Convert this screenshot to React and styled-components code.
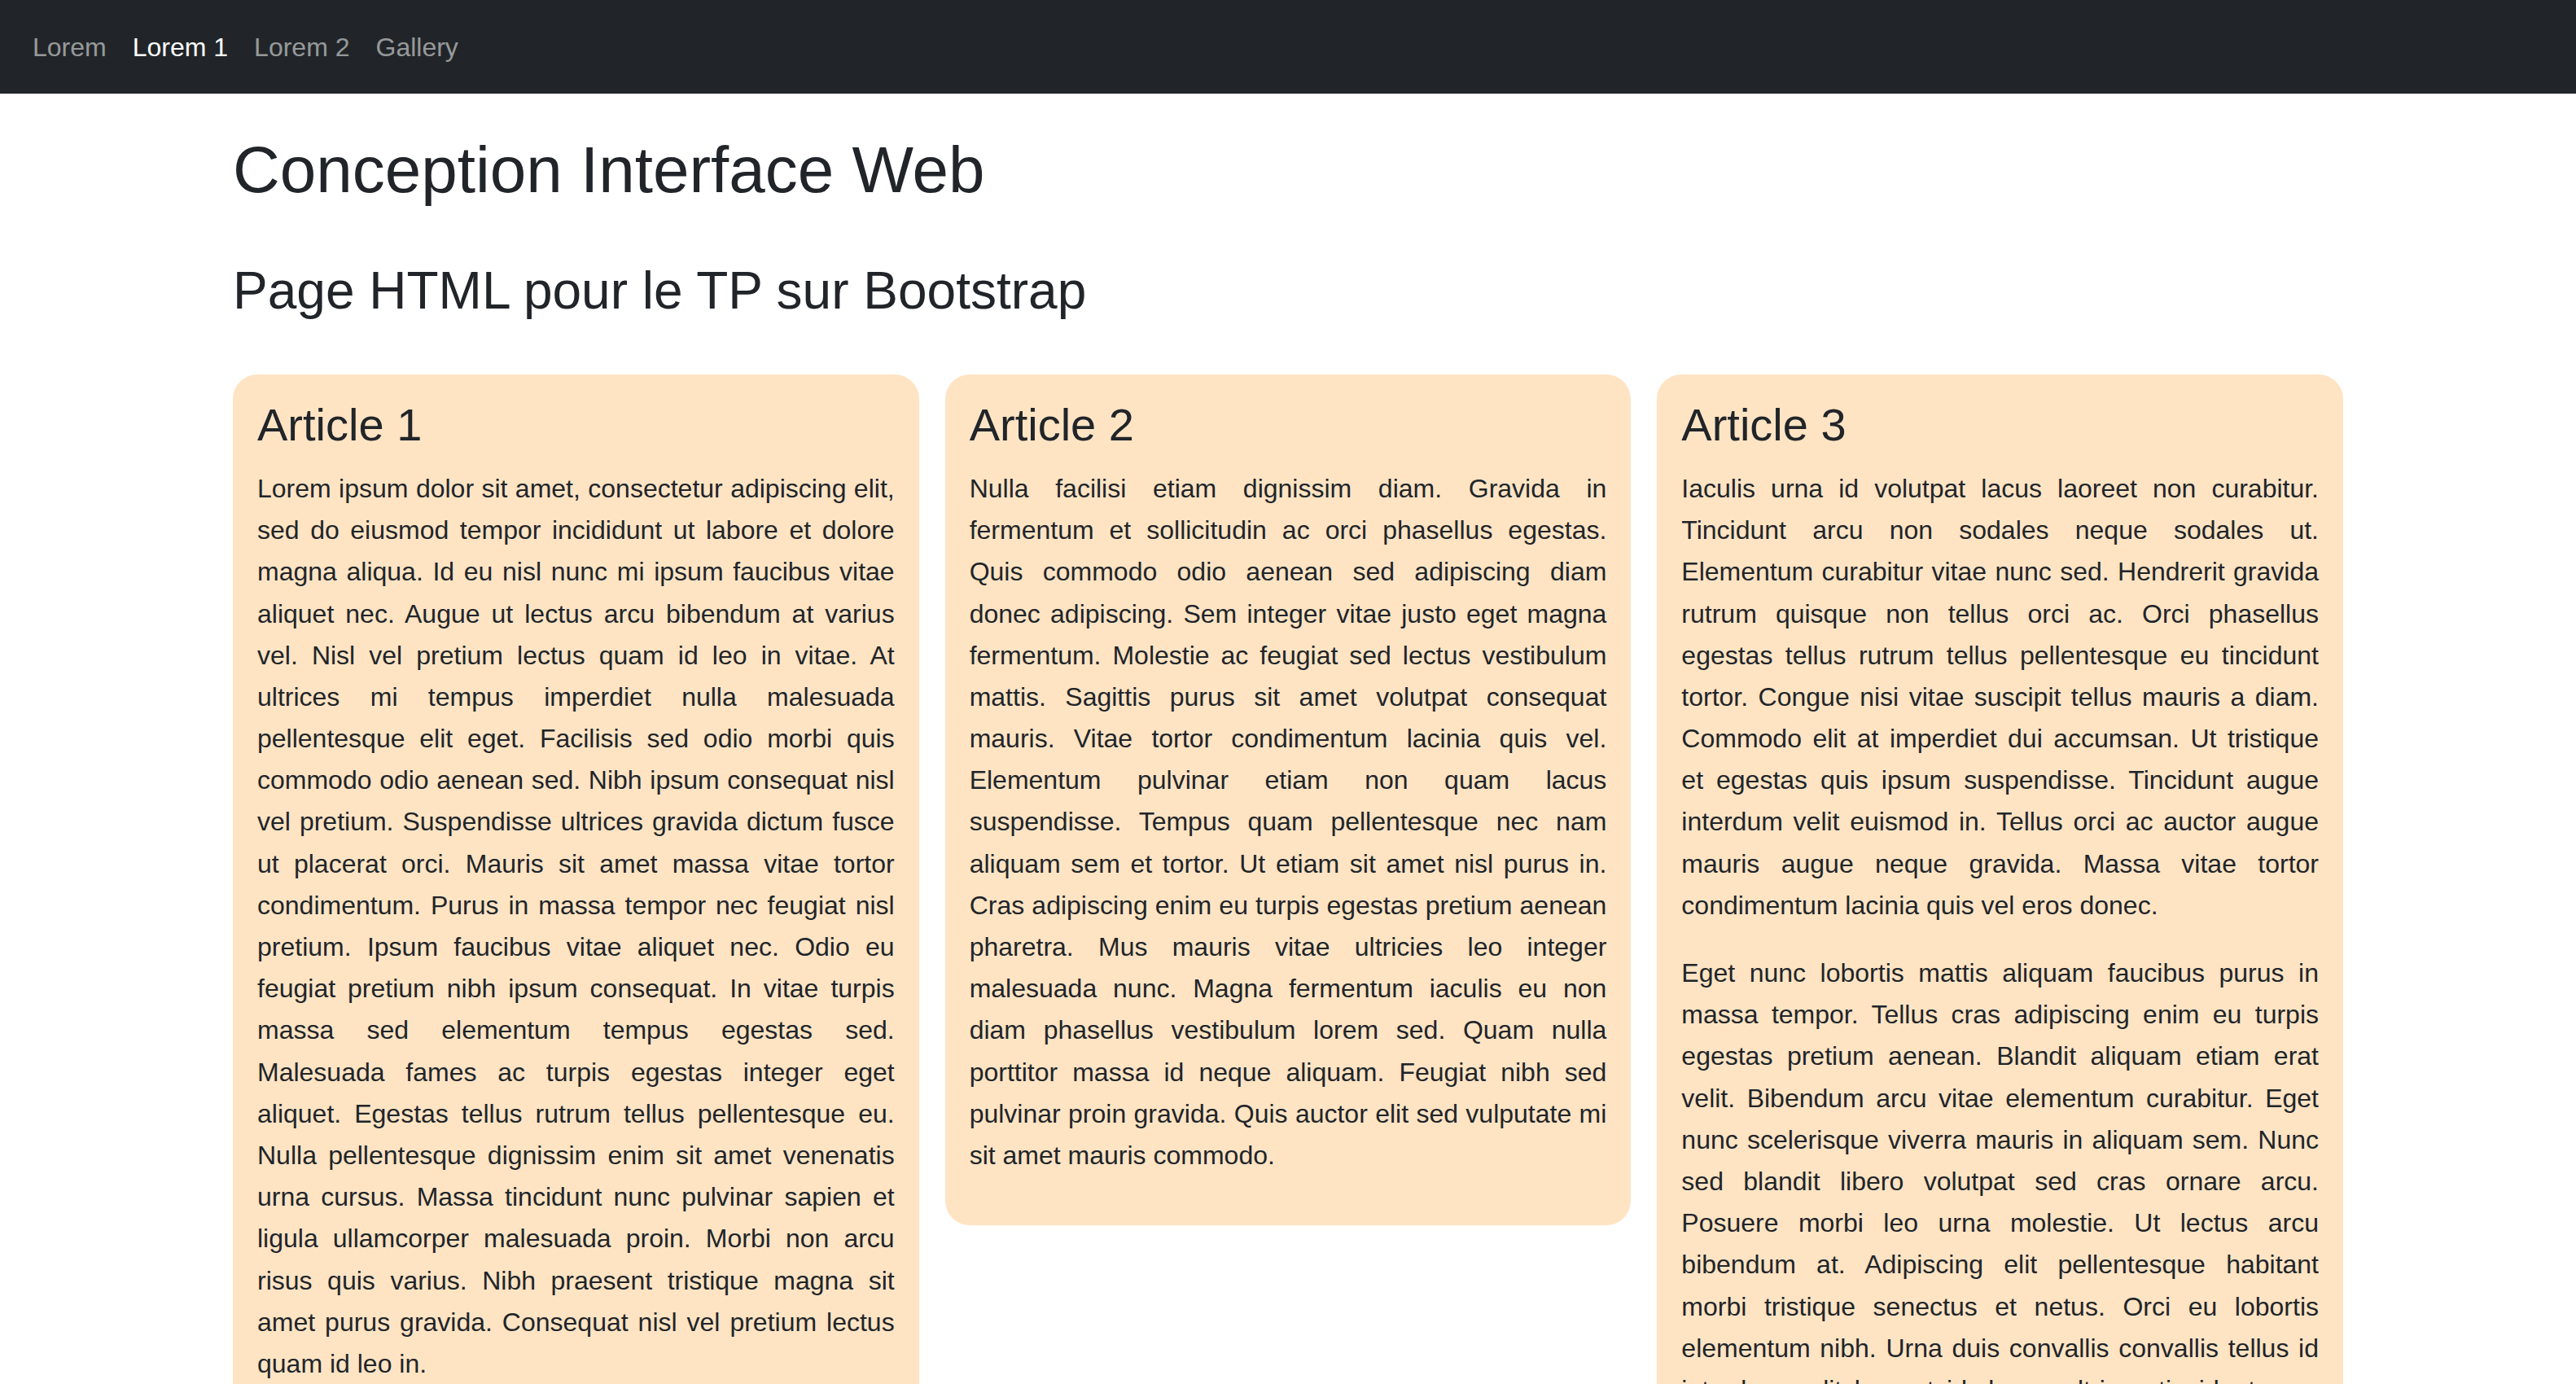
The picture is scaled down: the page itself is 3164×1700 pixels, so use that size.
import styled, { createGlobalStyle } from "styled-components";

const GlobalStyle = createGlobalStyle`
    * { box-sizing: border-box; }
    body {
        margin: 0;
        background: #fff;
        color: #212529;
        font-family: "Liberation Sans", Arial, sans-serif;
    }
`;

const links = [
    { label: 'Lorem', active: false },
    { label: 'Lorem 1', active: true },
    { label: 'Lorem 2', active: false },
    { label: 'Gallery', active: false },
];

const articles = [
    {
        title: 'Article 1',
        paragraphs: [
            'Lorem ipsum dolor sit amet, consectetur adipiscing elit, sed do eiusmod tempor incididunt ut labore et dolore magna aliqua. Id eu nisl nunc mi ipsum faucibus vitae aliquet nec. Augue ut lectus arcu bibendum at varius vel. Nisl vel pretium lectus quam id leo in vitae. At ultrices mi tempus imperdiet nulla malesuada pellentesque elit eget. Facilisis sed odio morbi quis commodo odio aenean sed. Nibh ipsum consequat nisl vel pretium. Suspendisse ultrices gravida dictum fusce ut placerat orci. Mauris sit amet massa vitae tortor condimentum. Purus in massa tempor nec feugiat nisl pretium. Ipsum faucibus vitae aliquet nec. Odio eu feugiat pretium nibh ipsum consequat. In vitae turpis massa sed elementum tempus egestas sed. Malesuada fames ac turpis egestas integer eget aliquet. Egestas tellus rutrum tellus pellentesque eu. Nulla pellentesque dignissim enim sit amet venenatis urna cursus. Massa tincidunt nunc pulvinar sapien et ligula ullamcorper malesuada proin. Morbi non arcu risus quis varius. Nibh praesent tristique magna sit amet purus gravida. Consequat nisl vel pretium lectus quam id leo in.',
        ],
    },
    {
        title: 'Article 2',
        paragraphs: [
            'Nulla facilisi etiam dignissim diam. Gravida in fermentum et sollicitudin ac orci phasellus egestas. Quis commodo odio aenean sed adipiscing diam donec adipiscing. Sem integer vitae justo eget magna fermentum. Molestie ac feugiat sed lectus vestibulum mattis. Sagittis purus sit amet volutpat consequat mauris. Vitae tortor condimentum lacinia quis vel. Elementum pulvinar etiam non quam lacus suspendisse. Tempus quam pellentesque nec nam aliquam sem et tortor. Ut etiam sit amet nisl purus in. Cras adipiscing enim eu turpis egestas pretium aenean pharetra. Mus mauris vitae ultricies leo integer malesuada nunc. Magna fermentum iaculis eu non diam phasellus vestibulum lorem sed. Quam nulla porttitor massa id neque aliquam. Feugiat nibh sed pulvinar proin gravida. Quis auctor elit sed vulputate mi sit amet mauris commodo.',
        ],
    },
    {
        title: 'Article 3',
        paragraphs: [
            'Iaculis urna id volutpat lacus laoreet non curabitur. Tincidunt arcu non sodales neque sodales ut. Elementum curabitur vitae nunc sed. Hendrerit gravida rutrum quisque non tellus orci ac. Orci phasellus egestas tellus rutrum tellus pellentesque eu tincidunt tortor. Congue nisi vitae suscipit tellus mauris a diam. Commodo elit at imperdiet dui accumsan. Ut tristique et egestas quis ipsum suspendisse. Tincidunt augue interdum velit euismod in. Tellus orci ac auctor augue mauris augue neque gravida. Massa vitae tortor condimentum lacinia quis vel eros donec.',
            'Eget nunc lobortis mattis aliquam faucibus purus in massa tempor. Tellus cras adipiscing enim eu turpis egestas pretium aenean. Blandit aliquam etiam erat velit. Bibendum arcu vitae elementum curabitur. Eget nunc scelerisque viverra mauris in aliquam sem. Nunc sed blandit libero volutpat sed cras ornare arcu. Posuere morbi leo urna molestie. Ut lectus arcu bibendum at. Adipiscing elit pellentesque habitant morbi tristique senectus et netus. Orci eu lobortis elementum nibh. Urna duis convallis convallis tellus id interdum velit laoreet id donec ultrices tincidunt arcu non sodales neque.',
        ],
    },
];

function App() {
    return (
        <>
            <GlobalStyle />
            <NavBar>
                {links.map(({ label, active }) => (
                    <NavLink key={label} href="#" $active={active}>{label}</NavLink>
                ))}
            </NavBar>
            <Container>
                <Title>Conception Interface Web</Title>
                <SubTitle>Page HTML pour le TP sur Bootstrap</SubTitle>
                <ArticleRow>
                    {articles.map(({ title, paragraphs }) => (
                        <ArticleCard key={title}>
                            <ArticleTitle>{title}</ArticleTitle>
                            {paragraphs.map((text, i) => (
                                <ArticleText key={i}>{text}</ArticleText>
                            ))}
                        </ArticleCard>
                    ))}
                </ArticleRow>
            </Container>
        </>
    );
}

const NavBar = styled.nav`
    background: #212529;
    height: 115px;
    display: flex;
    align-items: center;
    padding: 0 24px;
`;

const NavLink = styled.a`
    padding: 0 16px;
    font-size: 32px;
    line-height: 48px;
    text-decoration: none;
    color: ${({ $active }) => ($active ? '#fff' : 'rgba(255,255,255,0.55)')};
`;

const Container = styled.main`
    width: 2592px;
    margin: 0 auto;
    padding-top: 46px;
`;

const Title = styled.h1`
    margin: 0 0 62px 0;
    font-size: 80px;
    font-weight: 400;
    line-height: 1.2;
`;

const SubTitle = styled.h2`
    margin: 0 0 64px 0;
    font-size: 64px;
    font-weight: 400;
    line-height: 1.2;
`;

const ArticleRow = styled.div`
    display: grid;
    grid-template-columns: repeat(3, 1fr);
    gap: 32px;
    align-items: start;
`;

const ArticleCard = styled.article`
    background: #ffe4c4;
    border-radius: 30px;
    padding: 28px 30px 28px;
`;

const ArticleTitle = styled.h3`
    margin: 0 0 20px 0;
    font-size: 56px;
    font-weight: 400;
    line-height: 1.2;
`;

const ArticleText = styled.p`
    margin: 0 0 32px 0;
    font-size: 32px;
    line-height: 1.6;
    text-align: justify;
`;

export default App;
